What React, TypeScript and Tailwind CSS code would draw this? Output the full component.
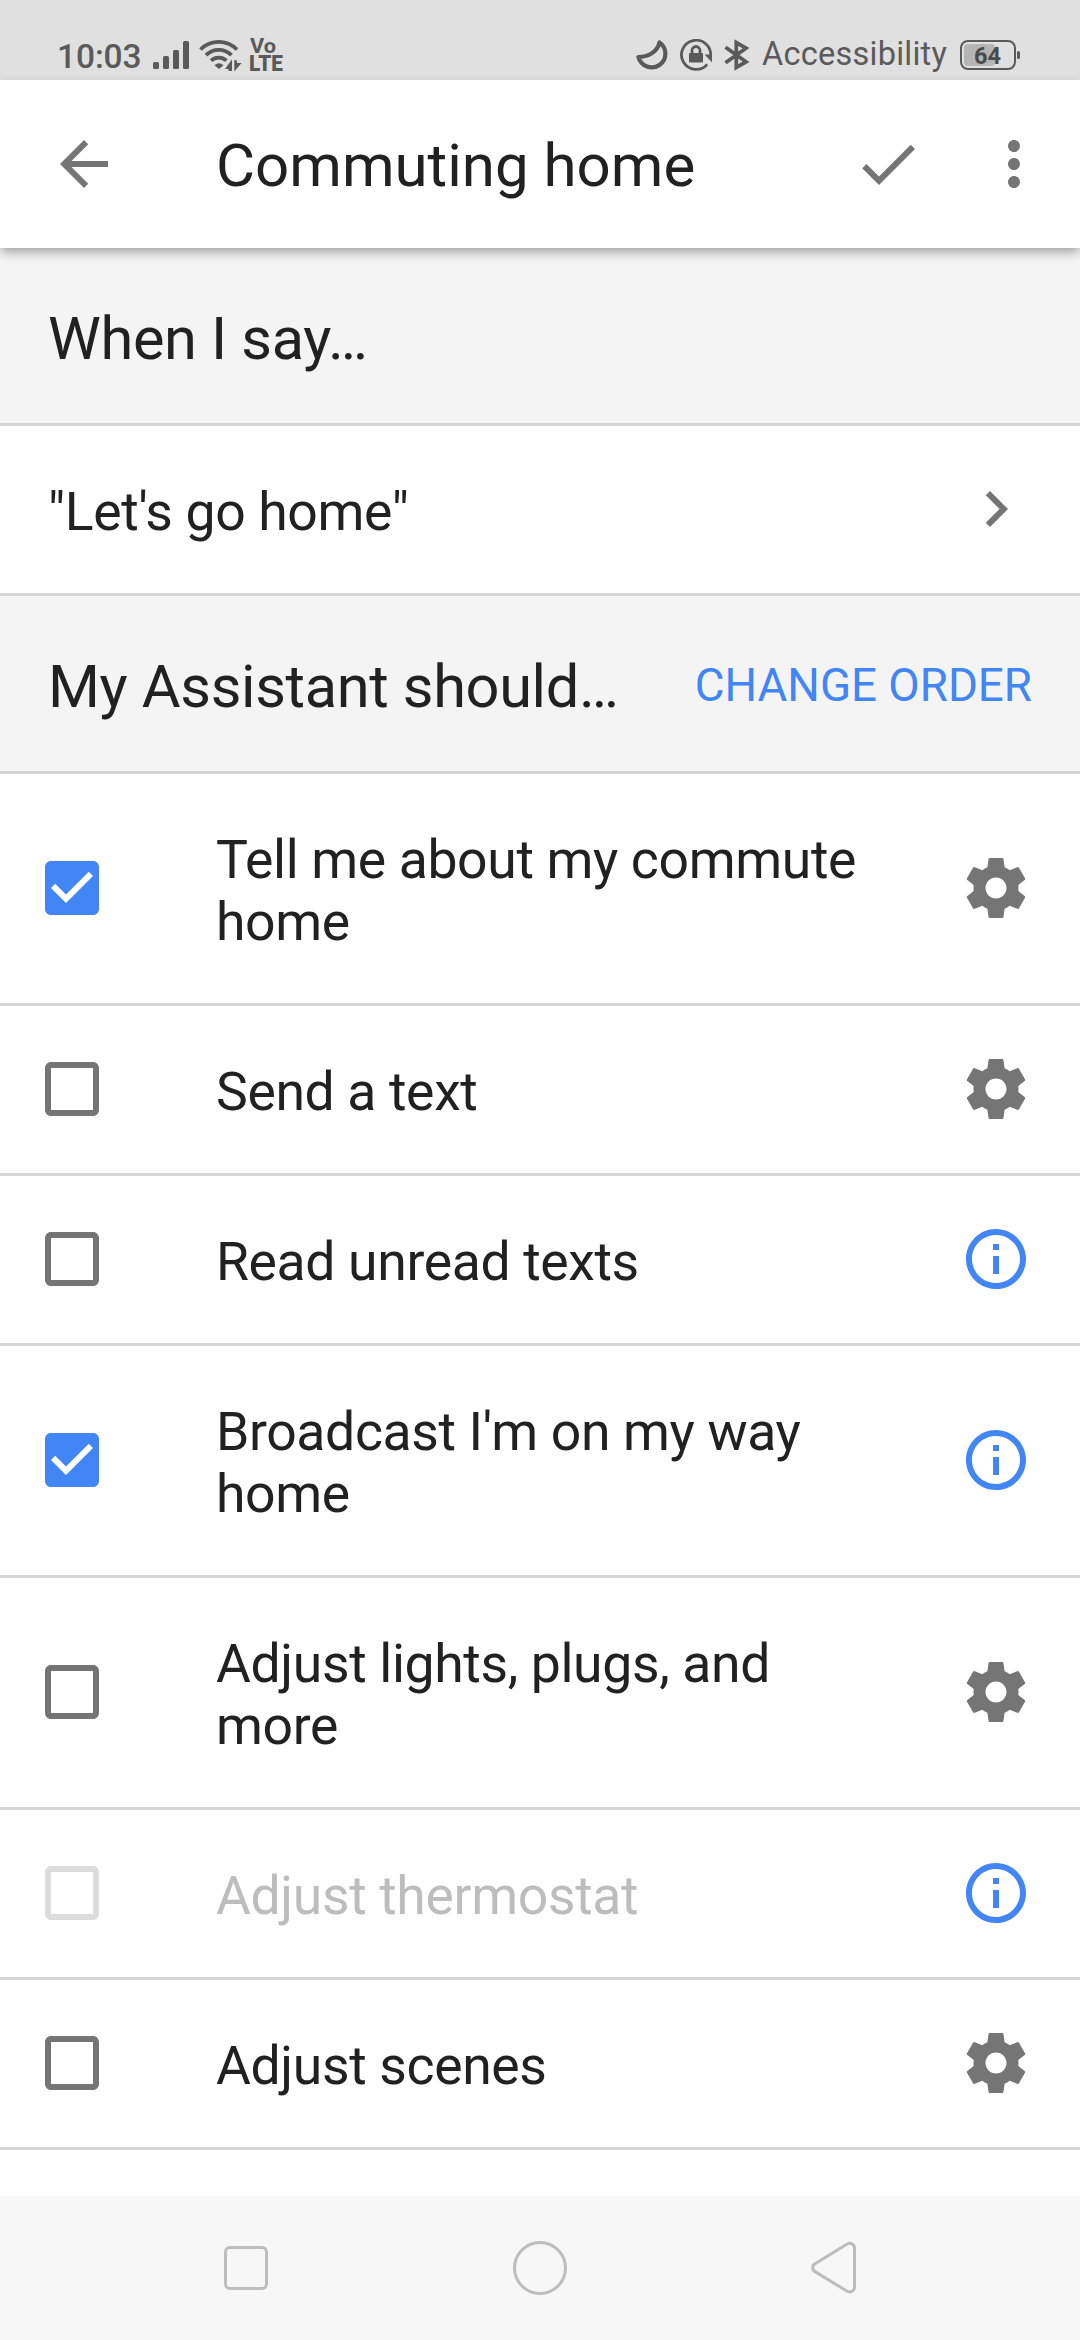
type Action = {
  label: string;
  icon: "settings" | "info";
  checked?: boolean;
  disabled?: boolean;
};

const actions: Action[] = [
  { label: "Tell me about my commute home", icon: "settings", checked: true },
  { label: "Send a text", icon: "settings" },
  { label: "Read unread texts", icon: "info" },
  { label: "Broadcast I'm on my way home", icon: "info", checked: true },
  { label: "Adjust lights, plugs, and more", icon: "settings" },
  { label: "Adjust thermostat", icon: "info", disabled: true },
  { label: "Adjust scenes", icon: "settings" },
];

const paths = {
  back: "M20 11H7.83l5.59-5.59L12 4l-8 8 8 8 1.41-1.41L7.83 13H20v-2z",
  check: "M9 16.17L4.83 12l-1.42 1.41L9 19 21 7l-1.41-1.41z",
  more: "M12 8c1.1 0 2-.9 2-2s-.9-2-2-2-2 .9-2 2 .9 2 2 2zm0 2c-1.1 0-2 .9-2 2s.9 2 2 2 2-.9 2-2-.9-2-2-2zm0 6c-1.1 0-2 .9-2 2s.9 2 2 2 2-.9 2-2-.9-2-2-2z",
  chevron: "M10 6L8.59 7.41 13.17 12l-4.58 4.59L10 18l6-6z",
  boxOff: "M19 5v14H5V5h14m0-2H5c-1.1 0-2 .9-2 2v14c0 1.1.9 2 2 2h14c1.1 0 2-.9 2-2V5c0-1.1-.9-2-2-2z",
  boxOn:
    "M19 3H5c-1.11 0-2 .9-2 2v14c0 1.1.89 2 2 2h14c1.11 0 2-.9 2-2V5c0-1.1-.89-2-2-2zm-9 14l-5-5 1.41-1.41L10 14.17l7.59-7.59L19 8l-9 9z",
  info: "M11 7h2v2h-2zm0 4h2v6h-2zm1-9C6.48 2 2 6.48 2 12s4.48 10 10 10 10-4.48 10-10S17.52 2 12 2zm0 18c-4.41 0-8-3.59-8-8s3.59-8 8-8 8 3.59 8 8-3.59 8-8 8z",
  settings:
    "M19.43 12.98c.04-.32.07-.64.07-.98s-.03-.66-.07-.98l2.11-1.65c.19-.15.24-.42.12-.64l-2-3.46c-.12-.22-.39-.3-.61-.22l-2.49 1c-.52-.4-1.08-.73-1.69-.98l-.38-2.65C14.46 2.18 14.25 2 14 2h-4c-.25 0-.46.18-.49.42l-.38 2.65c-.61.25-1.17.59-1.69.98l-2.49-1c-.23-.09-.49 0-.61.22l-2 3.46c-.13.22-.07.49.12.64l2.11 1.65c-.04.32-.07.65-.07.98s.03.66.07.98l-2.11 1.65c-.19.15-.24.42-.12.64l2 3.46c.12.22.39.3.61.22l2.49-1c.52.4 1.08.73 1.69.98l.38 2.65c.03.24.24.42.49.42h4c.25 0 .46-.18.49-.42l.38-2.65c.61-.25 1.17-.59 1.69-.98l2.49 1c.23.09.49 0 .61-.22l2-3.46c.12-.22.07-.49-.12-.64l-2.11-1.65zM12 15.5c-1.93 0-3.5-1.57-3.5-3.5s1.57-3.5 3.5-3.5 3.5 1.57 3.5 3.5-1.57 3.5-3.5 3.5z",
};

const Icon = ({ name, className = "" }: { name: keyof typeof paths; className?: string }) => (
  <svg viewBox="0 0 24 24" fill="currentColor" className={`size-[72px] shrink-0 ${className}`}>
    <path d={paths[name]} />
  </svg>
);

const StatusBar = () => (
  <div className="flex h-20 shrink-0 justify-between bg-[#e0e0e0] pr-[60px] pl-[57px] text-[#5a5a5a]">
    <div className="mt-[39px] flex h-8">
      <span className="w-[95px] text-[33.5px] leading-[35px] font-medium tracking-[-0.1px]">10:03</span>
      {/* signal */}
      <svg width="38" height="32" fill="currentColor">
        <rect x="1" y="23" width="6" height="7" rx="1.5" />
        <rect x="11" y="17" width="6" height="13" rx="1.5" />
        <rect x="21" y="11" width="6" height="19" rx="1.5" />
        <rect x="31" y="2" width="6" height="28" rx="1.5" />
      </svg>
      {/* wifi */}
      <svg width="44" height="34" className="ml-2" fill="none" stroke="currentColor" strokeWidth="3.8">
        <path d="M2.5 10.5C13 .3 28.5.3 39 10.5" />
        <path d="M8 16.2C15.2 9.2 26.3 9.2 33.5 16.2" />
        <path d="M13 21.6C17.5 17.6 24 17.6 28.5 21.6" />
        <path d="M16.5 26.2Q21 22.3 25.5 26.2L21 30z" fill="currentColor" stroke="none" />
        <path
          d="M27 30L34 20.3V32H30.5V30zM36.3 21H38.5L39 24H43.6L36.3 32.6z"
          fill="currentColor"
          stroke="none"
        />
      </svg>
      <svg
        width="34"
        height="34"
        className="ml-2 overflow-visible"
        fill="currentColor"
        fontFamily="Roboto, sans-serif"
      >
        <text x="0" y="13.5" fontSize="20" fontWeight="700" textLength="26" lengthAdjust="spacingAndGlyphs">
          Vo
        </text>
        <text x="-1" y="32" fontSize="22" fontWeight="900" textLength="34" lengthAdjust="spacingAndGlyphs">
          LTE
        </text>
      </svg>
    </div>
    <div className="mt-[39px] flex h-8">
      {/* do not disturb */}
      <svg width="33" height="32" fill="none" stroke="currentColor" strokeWidth="4.2" strokeLinejoin="round">
        <path d="M23.5 3.4A13.7 13.7 0 1 1 2.4 18C11 18 21.5 13.5 23.5 3.4z" />
      </svg>
      {/* rotation lock */}
      <svg width="33" height="32" className="ml-[11px]" fill="none" stroke="currentColor" strokeWidth="2.8">
        <path d="M30.6 17.5A14.6 14.6 0 1 0 27.2 25.3" />
        <path d="M24.5 15.5H32V23.5z" fill="currentColor" stroke="none" />
        <rect x="9" y="14" width="14" height="9.5" rx="0.8" fill="currentColor" stroke="none" />
        <path d="M12 14.5V11.5a4 4 0 0 1 8 0V14.5" />
      </svg>
      <svg width="26" height="32" className="ml-[11px]" fill="none" stroke="currentColor" strokeWidth="3.8">
        <path d="M1.5 8.2L22 22.8 12.3 28.5V3.5L22 9.2 1.5 23.8" />
      </svg>
      <span className="ml-3 w-[187px] text-[32.5px] leading-[31px] tracking-[0.25px]">Accessibility</span>
      {/* battery */}
      <svg width="61" height="32" className="ml-2.5" fontFamily="Roboto, sans-serif">
        <rect x="2" y="2" width="54" height="28" rx="7" fill="none" stroke="currentColor" strokeWidth="2" />
        <rect x="5" y="5" width="31" height="22" rx="4" fill="#b5b5b5" />
        <rect x="58" y="12" width="3" height="8" rx="1.5" fill="currentColor" />
        <text x="15" y="24.7" fontSize="23.5" fontWeight="700" fill="#4a4a4a">
          64
        </text>
      </svg>
    </div>
  </div>
);

const Header = () => (
  <header className="z-10 flex h-[168px] shrink-0 items-center bg-white pr-[30px] pl-12 text-[#757575] shadow-[0_5px_10px_-1px_rgba(0,0,0,0.35)]">
    <Icon name="back" />
    <h1 className="ml-24 flex-1 pt-1 text-[60px] leading-[70px] text-[#212121]">Commuting home</h1>
    <Icon name="check" />
    <Icon name="more" className="ml-[54px]" />
  </header>
);

const SectionTitle = ({ title, action }: { title: string; action?: string }) => (
  <div className="flex justify-between border-b-3 border-[#d6d6d6] bg-[#f4f4f4] px-12">
    <h2 className="pt-14 pb-[49px] text-[59.5px] leading-[70px] tracking-[-0.34px]">{title}</h2>
    {action && (
      <button className="self-start pt-[63px] text-[45.7px] leading-[54px] text-[#4285f4]">{action}</button>
    )}
  </div>
);

const ActionRow = ({ label, icon, checked, disabled }: Action) => (
  <li className="flex items-center border-b-3 border-[#d6d6d6] pr-12 pl-9">
    <Icon
      name={checked ? "boxOn" : "boxOff"}
      className={`mb-px ${checked ? "text-[#4285f4]" : disabled ? "text-[#dcdcdc]" : "text-[#757575]"}`}
    />
    <span
      className={`ml-[108px] flex-1 pt-[55px] pr-[72px] pb-[50px] text-[53.5px] leading-[62px] tracking-[-0.36px] ${disabled ? "text-[#bdbdbd]" : ""}`}
    >
      {label}
    </span>
    <Icon name={icon} className={`mb-px ${icon === "info" ? "text-[#4285f4]" : "text-[#757575]"}`} />
  </li>
);

const NavBar = () => (
  <nav className="flex h-36 shrink-0 items-center justify-center bg-[#f7f7f7] text-[#bdbdbd]">
    <div className="flex w-[294px] justify-center">
      <div className="size-11 rounded-md border-3" />
    </div>
    <div className="flex w-[294px] justify-center">
      <div className="size-[54px] rounded-full border-3" />
    </div>
    <div className="flex w-[294px] justify-center">
      <svg width="54" height="54" fill="none" stroke="currentColor" strokeWidth="3">
        <path d="M8 22.8L40.2 3A4.9 4.9 0 0 1 47.5 7.4V46.2A4.9 4.9 0 0 1 40.2 50.3L8 30.6A4.5 4.5 0 0 1 8 22.8z" />
      </svg>
    </div>
  </nav>
);

const App = () => {
  return (
    <div className="flex h-[2340px] w-[1080px] flex-col overflow-hidden bg-white font-[Roboto,sans-serif] text-[#212121]">
      <StatusBar />
      <Header />
      <main className="flex-1">
        <SectionTitle title="When I say…" />
        <div className="flex items-center justify-between border-b-3 border-[#d6d6d6] px-12">
          <span className="pt-[55px] pb-[50px] text-[53.5px] leading-[62px] tracking-[-0.36px]">"Let's go home"</span>
          <Icon name="chevron" className="mb-px text-[#757575]" />
        </div>
        <SectionTitle title="My Assistant should…" action="CHANGE ORDER" />
        <ul>
          {actions.map((action) => (
            <ActionRow key={action.label} {...action} />
          ))}
        </ul>
      </main>
      <NavBar />
    </div>
  );
};

export default App;
